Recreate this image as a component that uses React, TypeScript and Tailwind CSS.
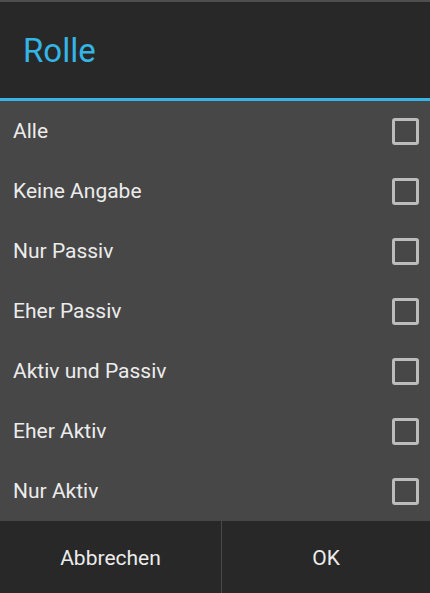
const options = [
  "Alle",
  "Keine Angabe",
  "Nur Passiv",
  "Eher Passiv",
  "Aktiv und Passiv",
  "Eher Aktiv",
  "Nur Aktiv",
]

export default function App() {
  return (
    <div className="flex h-[593px] w-[430px] flex-col bg-[#282828] font-['Roboto',sans-serif]">
      {/* Title */}
      <div className="h-[2px] bg-[#4e4e4e]" />
      <div className="flex h-[96px] items-center px-[23px]">
        <h1 className="text-[33px] leading-none text-[#33b5e5]">Rolle</h1>
      </div>
      <div className="h-[3px] bg-[#33b5e5]" />

      {/* Options */}
      <ul className="bg-[#474747]">
        {options.map((label) => (
          <li key={label} className="flex h-[60px] items-center justify-between pl-[13px] pr-[11px]">
            <span className="pt-[1px] text-[21px] text-[#ececec]">{label}</span>
            <span className="h-[27px] w-[27px] rounded-[3px] border-[3px] border-[#bcbcbc]" />
          </li>
        ))}
      </ul>

      {/* Buttons */}
      <div className="flex flex-1">
        <button className="w-[222px] border-r border-[#4a4a4a] pt-[3px] text-[21px] text-[#ececec]">Abbrechen</button>
        <button className="flex-1 pt-[3px] text-[21px] text-[#ececec]">OK</button>
      </div>
    </div>
  )
}
